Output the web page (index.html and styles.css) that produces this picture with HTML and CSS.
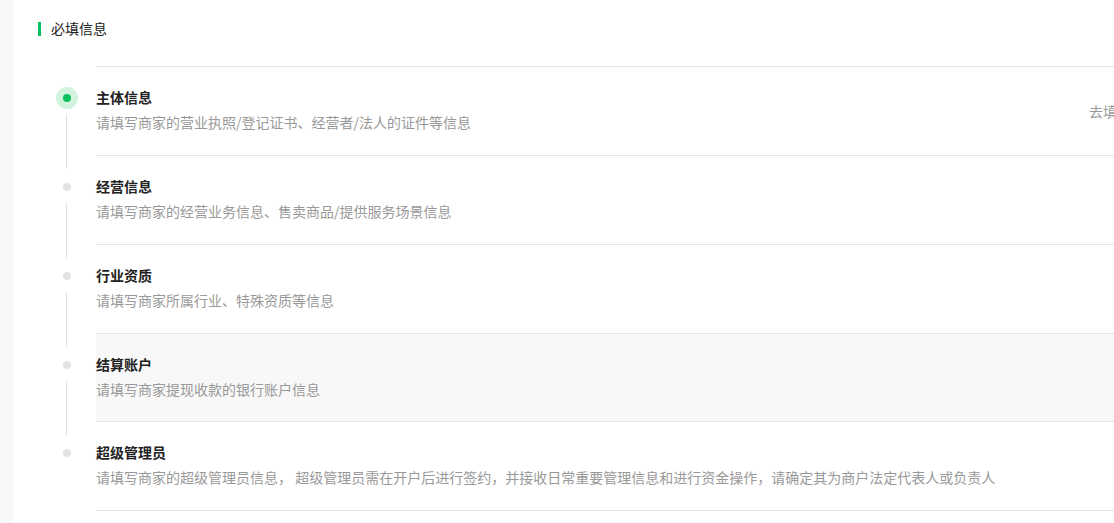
FILE: index.html
```html
<!DOCTYPE html>
<html lang="zh-CN">
<head>
<meta charset="utf-8">
<title>必填信息</title>
<link rel="stylesheet" href="styles.css">
</head>
<body>
<div class="page">
  <div class="side"></div>
  <div class="main">
    <div class="section-title"><span class="bar"></span>必填信息</div>
    <div class="steps">
      <div class="steps-top"></div>
      <div class="step active">
        <div class="rail"><span class="dot"></span></div>
        <div class="step-body">
          <div class="step-text">
            <div class="step-name">主体信息</div>
            <div class="step-desc">请填写商家的营业执照/登记证书、经营者/法人的证件等信息</div>
          </div>
          <a class="step-link">去填写</a>
        </div>
      </div>
      <div class="step">
        <div class="rail"><span class="dot"></span></div>
        <div class="step-body">
          <div class="step-text">
            <div class="step-name">经营信息</div>
            <div class="step-desc">请填写商家的经营业务信息、售卖商品/提供服务场景信息</div>
          </div>
        </div>
      </div>
      <div class="step">
        <div class="rail"><span class="dot"></span></div>
        <div class="step-body">
          <div class="step-text">
            <div class="step-name">行业资质</div>
            <div class="step-desc">请填写商家所属行业、特殊资质等信息</div>
          </div>
        </div>
      </div>
      <div class="step hover">
        <div class="rail"><span class="dot"></span></div>
        <div class="step-body">
          <div class="step-text">
            <div class="step-name">结算账户</div>
            <div class="step-desc">请填写商家提现收款的银行账户信息</div>
          </div>
        </div>
      </div>
      <div class="step last">
        <div class="rail"><span class="dot"></span></div>
        <div class="step-body">
          <div class="step-text">
            <div class="step-name">超级管理员</div>
            <div class="step-desc">请填写商家的超级管理员信息， 超级管理员需在开户后进行签约，并接收日常重要管理信息和进行资金操作，请确定其为商户法定代表人或负责人</div>
          </div>
        </div>
      </div>
    </div>
  </div>
</div>
</body>
</html>
```
FILE: styles.css
```css
html, body {
  margin: 0;
  padding: 0;
  background: #fff;
  overflow: hidden;
}
body {
  font-family: "Noto Sans CJK SC", "Noto Sans", "Liberation Sans", sans-serif;
  font-size: 14px;
  color: #333;
}
.page {
  display: flex;
  width: 1151px;
  min-height: 523px;
}
.side {
  width: 13px;
  flex: none;
  background: #f8f8f8;
}
.main {
  flex: 1;
  padding: 18px 0 0 25px;
}
.section-title {
  display: flex;
  align-items: center;
  gap: 10px;
  height: 20px;
  line-height: 20px;
  color: #222;
}
.bar {
  width: 3px;
  height: 14px;
  margin-top: 2px;
  background: #07c160;
}
.steps {
  margin-top: 28px;
}
.steps-top {
  margin-left: 58px;
  border-top: 1px solid #e5e5e5;
}
.step {
  display: flex;
}
.rail {
  position: relative;
  width: 58px;
  flex: none;
  display: flex;
  flex-direction: column;
  align-items: center;
  padding-top: 27px;
  box-sizing: border-box;
}
.rail::after {
  content: "";
  position: absolute;
  left: 28px;
  top: 47px;
  width: 1px;
  height: 55px;
  background: #e2e2e2;
}
.step.last .rail::after {
  display: none;
}
.dot {
  width: 8px;
  height: 8px;
  border-radius: 50%;
  background: #e3e3e3;
}
.step.active .rail {
  padding-top: 20px;
}
.step.active .dot {
  width: 8px;
  height: 8px;
  background: #07c160;
  border: 7px solid #d2f4de;
}
.step-body {
  flex: 1;
  display: flex;
  align-items: center;
  justify-content: space-between;
  height: 88px;
  border-bottom: 1px solid #e5e5e5;
  padding-right: 20px;
}
.step.hover .step-body {
  height: 87px;
  background: #f8f8f8;
}
.step-text {
  margin-top: -3px;
}
.step-name {
  line-height: 20px;
  font-weight: 700;
  color: #222;
}
.step-desc {
  margin-top: 5px;
  line-height: 20px;
  color: #999;
}
.step-link {
  color: #999;
  line-height: 20px;
  cursor: pointer;
}
```
